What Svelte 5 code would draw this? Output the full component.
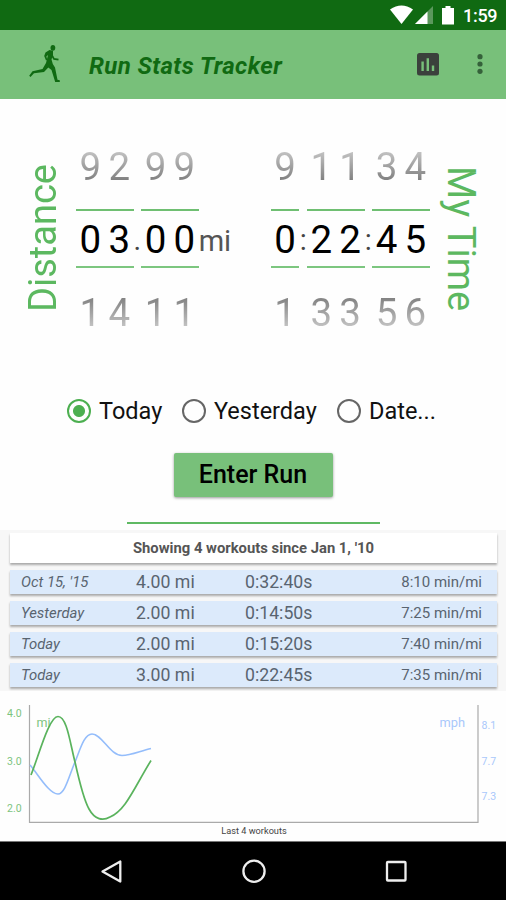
<script>
	let when = 'Today';

	const distance = [
		{ above: '92', value: '03', below: '14' },
		{ sep: '.' },
		{ above: '99', value: '00', below: '11' }
	];
	const time = [
		{ above: '9', value: '0', below: '1' },
		{ sep: ':' },
		{ above: '11', value: '22', below: '33' },
		{ sep: ':' },
		{ above: '34', value: '45', below: '56' }
	];
	const days = ['Today', 'Yesterday', 'Date...'];
	const runs = [
		{ day: "Oct 15, '15", miles: '4.00 mi', time: '0:32:40s', pace: '8:10 min/mi' },
		{ day: 'Yesterday', miles: '2.00 mi', time: '0:14:50s', pace: '7:25 min/mi' },
		{ day: 'Today', miles: '2.00 mi', time: '0:15:20s', pace: '7:40 min/mi' },
		{ day: 'Today', miles: '3.00 mi', time: '0:22:45s', pace: '7:35 min/mi' }
	];
</script>

<div class="screen">
	<div class="status">
		<svg width="66" height="30" viewBox="389 0 66 30">
			<path d="M390 9.5Q401.500 1.500 413 9.500L401.500 24Z" fill="#fff" />
			<path d="M433 6V24H415Z" fill="#5b985c" />
			<path d="M427.500 11.500V24H415Z" fill="#fff" />
			<path d="M442 8H445.500V6H450.500V8H454V24.500H442Z" fill="#fff" />
		</svg>
		<span>1:59</span>
	</div>

	<header>
		<svg class="runner" width="32" height="40" viewBox="29 45 32 40">
			<ellipse cx="52.900" cy="48.800" rx="2.400" ry="2.900" fill="#106a12" />
			<path d="M49.500 51L53 51.800L53 56L51.500 60.500L52.800 65L55 68.500L57.500 80.800L59.800 81.200V82.900H55.200L51.500 71L48.300 68.500L44 73L34 74.300L30.500 78L29.200 76.800L32.500 72.300L42.500 70L46 64L48 56L46.400 57.500L47.200 60.500L46 61.500L44.200 57L45.500 53.500Z" fill="#106a12" />
			<path d="M51.500 55.500L54 59.900L58.500 60.700" fill="none" stroke="#106a12" stroke-width="1.700" />
		</svg>
		<h1>Run Stats Tracker</h1>
		<svg class="stats" width="22" height="23" viewBox="0 0 22 23">
			<rect width="22" height="22.500" rx="2.500" fill="#3b413c" />
			<path d="M5.600 8.500V18M10.800 5.300V18M16 12.500V18" stroke="#78c07a" stroke-width="2.400" />
		</svg>
		<svg class="more" width="6" height="20" viewBox="0 0 6 20">
			<circle cx="3" cy="2.700" r="2.600" />
			<circle cx="3" cy="10" r="2.600" />
			<circle cx="3" cy="17.300" r="2.600" />
		</svg>
	</header>

	<section class="pickers">
		<div class="side left">Distance</div>
		<div class="picker">
			{#each distance as part}
				{#if part.sep}
					<div class="sep">{part.sep}</div>
				{:else}
					<div class="wheel">
						<div class="row above">{#each part.above as d}<span>{d}</span>{/each}</div>
						<div class="row value">{#each part.value as d}<span>{d}</span>{/each}</div>
						<div class="row below">{#each part.below as d}<span>{d}</span>{/each}</div>
					</div>
				{/if}
			{/each}
			<div class="unit">mi</div>
		</div>
		<div class="picker">
			{#each time as part}
				{#if part.sep}
					<div class="sep">{part.sep}</div>
				{:else}
					<div class="wheel">
						<div class="row above">{#each part.above as d}<span>{d}</span>{/each}</div>
						<div class="row value">{#each part.value as d}<span>{d}</span>{/each}</div>
						<div class="row below">{#each part.below as d}<span>{d}</span>{/each}</div>
					</div>
				{/if}
			{/each}
		</div>
		<div class="side right">My Time</div>
	</section>

	<div class="days">
		{#each days as day}
			<label>
				<input type="radio" bind:group={when} value={day} />
				{day}
			</label>
		{/each}
	</div>

	<button>Enter Run</button>
	<div class="divider"></div>

	<section class="log">
		<div class="summary">Showing 4 workouts since Jan 1, '10</div>
		{#each runs as run}
			<div class="run">
				<em>{run.day}</em>
				<span class="miles">{run.miles}</span>
				<span class="time">{run.time}</span>
				<span class="pace">{run.pace}</span>
			</div>
		{/each}
	</section>

	<svg class="chart" width="506" height="151" viewBox="0 691 506 151">
		<path d="M29.500 705V822.300H478V705" fill="none" stroke="#aaa" stroke-width="1.200" />
		<g fill="#7cc47f" font-size="10.500">
			<text x="7" y="717">4.0</text>
			<text x="7" y="764.500">3.0</text>
			<text x="7" y="811.500">2.0</text>
			<text x="36.500" y="726.500" font-size="12.500">mi</text>
		</g>
		<g fill="#a9c8fb" font-size="10.500">
			<text x="481.500" y="728.500">8.1</text>
			<text x="481.500" y="764.500">7.7</text>
			<text x="481.500" y="800">7.3</text>
			<text x="439.500" y="726.500" font-size="12.800">mph</text>
		</g>
		<path d="M30 765C38 774 49 794 58 794C65 794 69 776 75 762C80 750 84 734 92 734C102 734 110 755.500 122 755.500C131 755.500 140 751 151 748.500" fill="none" stroke="#94bdfb" stroke-width="1.600" />
		<path d="M31 775C39 755 49 716.500 58 716.500C67 716.500 70 743 75 762C79 780 84 800 89 809C95 820 103 821 110 817C126 810 134 788 151 760.500" fill="none" stroke="#5ab35d" stroke-width="1.700" />
		<text x="254" y="834" font-size="9.200" text-anchor="middle" fill="#444">Last 4 workouts</text>
		<path d="M0 841.500H506" stroke="#777" />
	</svg>

	<nav>
		<svg width="506" height="58" viewBox="0 842 506 58" fill="none" stroke="#eee" stroke-width="2.300">
			<path d="M102.500 871.500L120.300 861.500V881.500Z" stroke-linejoin="round" />
			<circle cx="254" cy="871.200" r="10.600" />
			<rect x="387" y="862" width="18.500" height="18.500" rx="0.800" />
		</svg>
	</nav>
</div>

<style>
	:global(body) {
		margin: 0;
		background: #fefefe;
	}
	.screen {
		width: 506px;
		height: 900px;
		overflow: hidden;
		display: flex;
		flex-direction: column;
		font-family: Roboto, sans-serif;
		background: #fefefe;
	}
	.status {
		height: 30px;
		flex: none;
		display: flex;
		justify-content: flex-end;
		background: #106a12;
		color: #fff;
		font-size: 18px;
		font-weight: 500;
		line-height: 32px;
	}
	.status span {
		width: 43px;
		margin-left: 8px;
		letter-spacing: -0.3px;
	}
	header {
		height: 68.500px;
		flex: none;
		display: flex;
		align-items: center;
		background: #78c07a;
	}
	.runner {
		margin-left: 29px;
	}
	h1 {
		margin: 3px auto 0 28px;
		font-size: 24px;
		font-weight: 700;
		font-style: italic;
		color: #106a12;
		letter-spacing: 0.4px;
		white-space: nowrap;
	}
	.stats {
		margin-right: 38px;
	}
	.more {
		margin-right: 23px;
		fill: #35613a;
	}
	.pickers {
		height: 222px;
		flex: none;
		display: flex;
		align-items: center;
		margin-top: 30.500px;
	}
	.side {
		writing-mode: vertical-rl;
		font-size: 38px;
		line-height: 44px;
		color: #5cb860;
		white-space: nowrap;
	}
	.left {
		transform: rotate(180deg);
		margin-left: 21px;
		margin-right: 11px;
		margin-bottom: 4px;
	}
	.right {
		margin-left: 9px;
		margin-bottom: 3px;
	}
	.picker {
		display: flex;
		align-items: center;
	}
	.picker + .picker {
		margin-left: 38px;
	}
	.row {
		height: 74px;
		display: flex;
		align-items: center;
	}
	.row span {
		width: 28.800px;
		text-align: center;
		font-size: 38.500px;
		line-height: 46px;
	}
	.value {
		height: 55.500px;
		margin: 4.500px 0 8px;
		border-top: 2.500px solid #6fbf72;
		border-bottom: 2.500px solid #7cc67f;
		color: #000;
	}
	.value span {
		padding-top: 3px;
	}
	.above span {
		background: linear-gradient(#c4c4c4 15%, #7a7a7a 85%);
		background-clip: text;
		color: transparent;
	}
	.below span {
		background: linear-gradient(#808080 15%, #c8c8c8 85%);
		background-clip: text;
		color: transparent;
	}
	.sep {
		width: 7.500px;
		display: flex;
		justify-content: center;
		font-size: 29px;
		color: #444;
	}
	.unit {
		width: 34px;
		padding-top: 2px;
		font-size: 29px;
		color: #555;
	}
	.days {
		display: flex;
		height: 60px;
		margin: 29.500px 0 0 67px;
		font-size: 23.500px;
		color: #111;
		flex: none;
	}
	label {
		display: flex;
		align-items: center;
		white-space: nowrap;
		gap: 8px;
	}
	label:nth-child(1) {
		width: 115px;
	}
	label:nth-child(2) {
		width: 155px;
	}
	input {
		appearance: none;
		box-sizing: border-box;
		width: 24px;
		height: 24px;
		margin: 0;
		border: 2px solid #666;
		border-radius: 50%;
	}
	input:checked {
		border-color: #4caf50;
		background: radial-gradient(circle, #4caf50 5.500px, transparent 6.500px);
	}
	button {
		align-self: center;
		flex: none;
		width: 159px;
		height: 44px;
		margin-top: 12px;
		padding: 0;
		border: 0;
		border-radius: 2px;
		background: #78c07a;
		box-shadow: 0 1px 3px rgba(0, 0, 0, 0.4);
		font: 500 25px Roboto, sans-serif;
		color: #000;
	}
	.divider {
		align-self: center;
		flex: none;
		width: 253px;
		height: 2px;
		margin: 25.500px 0 5.500px;
		background: #5fb963;
	}
	.log {
		height: 161px;
		flex: none;
		box-sizing: border-box;
		padding: 3px 9px 0 10px;
		background: #f7f7f7;
		color: #555;
	}
	.summary {
		height: 30px;
		margin-bottom: 7px;
		background: #fff;
		box-shadow: 0 1.500px 2px #aaa;
		text-align: center;
		font-size: 14.800px;
		font-weight: 700;
		line-height: 31px;
	}
	.run {
		height: 24px;
		margin-bottom: 7px;
		padding: 0 15px 0 11px;
		display: flex;
		align-items: center;
		background: #dceafb;
		box-shadow: 0 1.500px 2px #aaa;
		font-size: 17.700px;
		color: #596470;
		white-space: nowrap;
	}
	.run em {
		width: 115px;
		font-size: 14.900px;
	}
	.miles {
		width: 109px;
	}
	.pace {
		margin-left: auto;
		font-size: 15px;
	}
	.chart {
		flex: none;
		display: block;
	}
	nav {
		height: 58px;
		flex: none;
		background: #000;
	}
</style>
